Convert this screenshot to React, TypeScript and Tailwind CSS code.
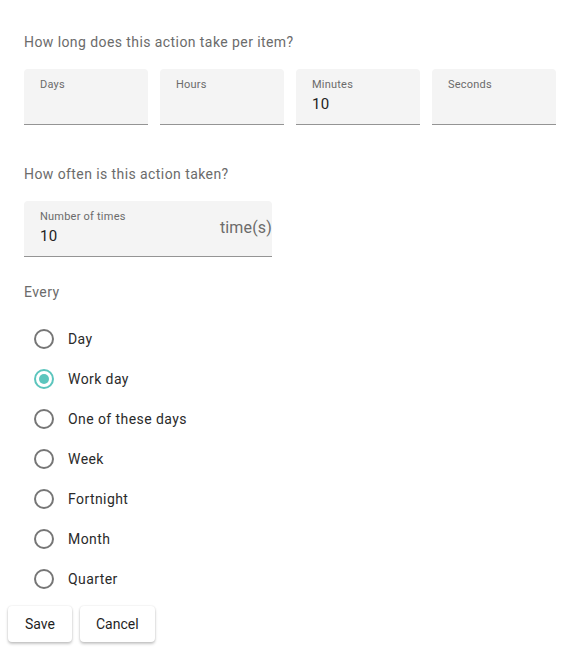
import { useState } from 'react';

const durationFields = [
  { label: 'Days', value: '' },
  { label: 'Hours', value: '' },
  { label: 'Minutes', value: '10' },
  { label: 'Seconds', value: '' },
];

const frequencies = ['Day', 'Work day', 'One of these days', 'Week', 'Fortnight', 'Month', 'Quarter'];

function FilledField({ label, value, className = '', suffix }: { label: string; value: string; className?: string; suffix?: string }) {
  return (
    <div className={`relative h-[56px] bg-[#f4f4f4] rounded-t border-b border-[#949494] px-4 ${className}`}>
      <div className="pt-[8px] text-[11px] leading-[16px] text-[#6b6b6b] tracking-[0.02em]">{label}</div>
      <div className="text-[15px] leading-[22px] text-[#222] tracking-[0.02em]">{value}</div>
      {suffix && (
        <span className="absolute right-0 top-[16px] text-[16px] leading-[22px] text-[#6b6b6b] tracking-[0.01em]">{suffix}</span>
      )}
    </div>
  );
}

export default function App() {
  const [selected, setSelected] = useState('Work day');

  return (
    <div className="w-[588px] h-[648px] bg-white font-['Roboto',sans-serif] overflow-hidden">
      <div className="px-6 pt-8">
        <p className="text-[14px] leading-[20px] text-[#6b6b6b] tracking-[0.03em]">How long does this action take per item?</p>
        <div className="grid grid-cols-4 gap-3 w-[532px] mt-[17px]">
          {durationFields.map((f) => (
            <FilledField key={f.label} label={f.label} value={f.value} />
          ))}
        </div>

        <p className="mt-[39px] text-[14px] leading-[20px] text-[#6b6b6b] tracking-[0.03em]">How often is this action taken?</p>
        <FilledField label="Number of times" value="10" suffix="time(s)" className="w-[248px] mt-[17px]" />

        <p className="mt-[25px] text-[14px] leading-[20px] text-[#6b6b6b] tracking-[0.03em]">Every</p>

        <div className="mt-[17px] flex flex-col">
          {frequencies.map((f) => {
            const checked = f === selected;
            return (
              <label key={f} className="h-10 flex items-center cursor-pointer" onClick={() => setSelected(f)}>
                <span className="w-10 flex justify-center">
                  <span
                    className={`w-5 h-5 rounded-full border-2 flex items-center justify-center ${checked ? 'border-[#5cc5bd]' : 'border-[#767676]'}`}
                  >
                    {checked && <span className="w-[10px] h-[10px] rounded-full bg-[#5cc5bd]" />}
                  </span>
                </span>
                <span className="ml-1 text-[14px] leading-[20px] text-[#2a2a2a] tracking-[0.03em]">{f}</span>
              </label>
            );
          })}
        </div>
      </div>

      <div className="flex gap-2 pl-2 mt-[7px]">
        <button className="h-9 min-w-[64px] px-4 bg-white rounded text-[14px] text-[#1f1f1f] shadow-[0_2px_3px_rgba(0,0,0,0.22),0_0_2px_rgba(0,0,0,0.12)]">
          Save
        </button>
        <button className="h-9 min-w-[64px] px-4 bg-white rounded text-[14px] text-[#1f1f1f] shadow-[0_2px_3px_rgba(0,0,0,0.22),0_0_2px_rgba(0,0,0,0.12)]">
          Cancel
        </button>
      </div>
    </div>
  );
}
